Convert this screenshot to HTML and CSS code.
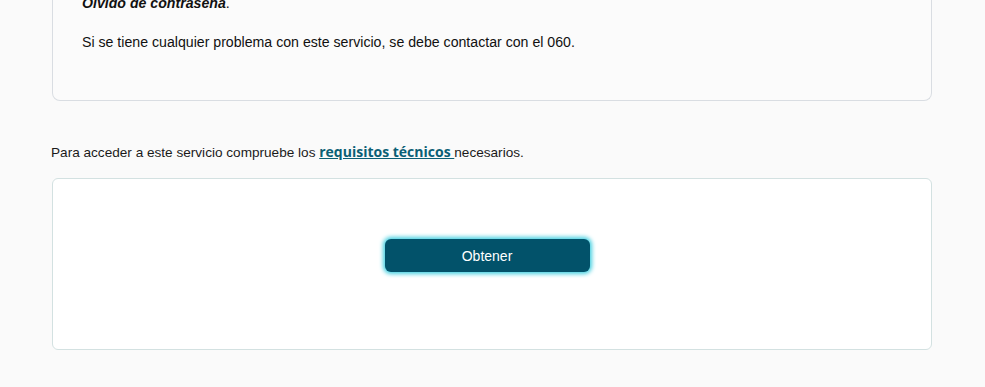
FILE: index.html
```html
<!DOCTYPE html>
<html lang="es">
<head>
<meta charset="utf-8">
<link rel="stylesheet" href="styles.css">
</head>
<body>
<main class="page">
  <section class="info-card">
    <p class="para"><strong><em>Olvido de contraseña</em></strong>.</p>
    <p class="para">Si se tiene cualquier problema con este servicio, se debe contactar con el 060.</p>
  </section>
  <p class="req">Para acceder a este servicio compruebe los <a class="req-link" href="#">requisitos técnicos </a>necesarios.</p>
  <section class="action-card">
    <button class="btn" type="button">Obtener</button>
  </section>
</main>
</body>
</html>
```
FILE: styles.css
```css
html, body {
  margin: 0;
  padding: 0;
  background: #fafafa;
}
body {
  font-family: "Liberation Sans", Arial, sans-serif;
  font-size: 14px;
  color: #111;
  overflow: hidden;
}
.page {
  width: 880px;
  margin: -31px 0 0 51px;
}
.info-card {
  margin-left: 1px;
  width: 880px;
  border: 1px solid #d9dde2;
  border-top: none;
  border-radius: 0 0 8px 8px;
  background: #fbfbfb;
  padding: 24px 29px 48px;
  box-sizing: border-box;
}
.para {
  margin: 0;
  line-height: 20px;
  font-size: 14.15px;
}
.para + .para {
  margin-top: 19px;
}
.req {
  margin: 41px 0 0;
  line-height: 20px;
  font-size: 13.6px;
  color: #1a1a1a;
}
.req-link {
  font-family: "Open Sans", sans-serif;
  font-weight: 700;
  font-size: 14px;
  color: #0b5f75;
  text-decoration: underline;
}
.action-card {
  margin: 15px 0 0 1px;
  width: 880px;
  height: 172px;
  box-sizing: border-box;
  border: 1px solid #d3e1e1;
  border-radius: 6px;
  background: #fff;
  display: flex;
  justify-content: center;
  align-items: flex-start;
  padding: 60px 10px 0 0;
}
.btn {
  width: 205px;
  height: 33px;
  border: none;
  border-radius: 6px;
  background: #02526a;
  color: #fff;
  font-family: "Liberation Sans", Arial, sans-serif;
  font-size: 14px;
  box-shadow: 0 0 4px 2px #45cfe0;
  cursor: pointer;
}
```
